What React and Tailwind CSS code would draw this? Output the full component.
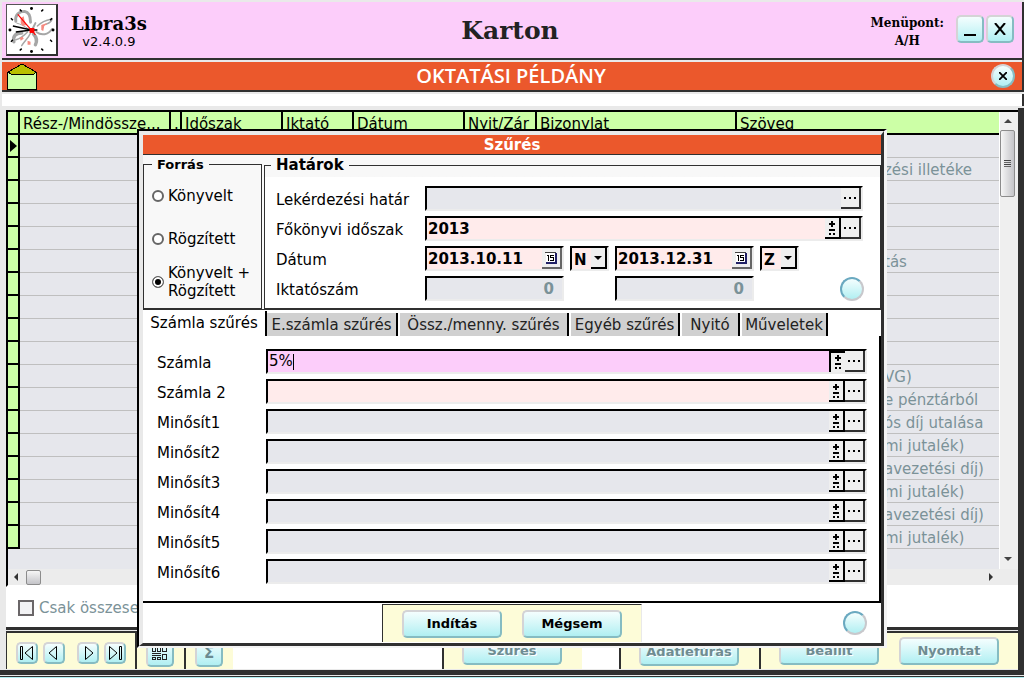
import React from 'react';

const Bevel = ({ className = '', children, ...rest }) => (
  <button
    type="button"
    className={`flex shrink-0 items-center justify-center rounded-[5px] border-t-2 border-l-2 border-r-2 border-b-2 border-t-[#d4d4d6] border-l-[#d4d4d6] border-r-[#86bcc2] border-b-[#86bcc2] bg-gradient-to-b from-[#f4fefe] to-[#b0eff2] ${className}`}
    {...rest}
  >
    {children}
  </button>
);

const RoundButton = ({ label }) => (
  <button
    type="button"
    aria-label={label}
    className="size-6 shrink-0 rounded-full border-2 border-t-[#6aa9c0] border-l-[#6aa9c0] border-r-[#c8c8cc] border-b-[#c8c8cc] bg-gradient-to-b from-[#f4fefe] to-[#b0eff2]"
  />
);

const Logo = () => (
  <svg viewBox="0 0 50 50" className="size-[50px]" aria-hidden="true">
    <g fill="none" stroke="#a6a6a6" strokeLinecap="round">
      <path d="M9 16C8 10 12 6 18 6c5 1 6 6 6 11" strokeWidth="3" />
      <path d="M10 18c4 1 8 3 12 6" strokeWidth="1" />
      <path d="M31 21c4-4 8-6 14-7M46 14c-1 3-3 4-6 5" strokeWidth="1.5" />
      <path d="M30 27c5 4 12 3 16-3" strokeWidth="2" />
      <path d="M15 28c-7 0-9 4-8 9" strokeWidth="3.5" />
      <path d="M9 35c4-1 8-4 12-8M24 28c-2 5-6 8-9 13" strokeWidth="1.5" />
      <path d="M27 29c3 3 4 7 2 11" strokeWidth="3.5" />
      <path d="M26 24l3-6" strokeWidth="2" />
    </g>
    <g fill="#f58a80">
      <path d="M14 13l3-2 1 5 2 4-4 1-2-3zM35 20l5-2 1 1-3 2-1 5-2-1zM13 33l3-1 1 2-3 2zM21 36l3 1v3h-3z" />
    </g>
    <g fill="#000">
      <circle cx="25" cy="3" r="1.5" />
      <circle cx="25" cy="47" r="1.5" />
      <circle cx="3" cy="25" r="1.5" />
      <circle cx="47" cy="25" r="1.5" />
    </g>
    <path
      d="M13 4l2 2M37 4l-2 2M4 13l2 2M46 13l-2 2M4 37l2-2M46 37l-2-2M13 46l2-2M37 46l-2-2M6 21l19 4-16 2M25 25h6"
      stroke="#000"
      strokeWidth="1.5"
      fill="none"
    />
    <path d="M11 9l18 21" stroke="#f00" strokeWidth="1.2" />
    <rect x="23" y="23" width="5" height="5" fill="#f00" />
  </svg>
);

const Envelope = () => (
  <svg viewBox="0 0 30 27" className="h-[27px] w-[30px]" aria-hidden="true" shapeRendering="crispEdges">
    <rect x=".5" y="9.5" width="29" height="17" fill="#ccffa6" stroke="#000" />
    <path d="M1 9L15 1l14 8-2 2H4z" fill="#b9bf00" stroke="#000" />
  </svg>
);

const NavIcon = ({ d }) => (
  <svg viewBox="0 0 16 16" className="size-4 shrink-0" fill="none" stroke="#000" aria-hidden="true">
    <path d={d} />
  </svg>
);

const DotsButton = () => (
  <button
    type="button"
    aria-label="Tallózás"
    className="flex h-[21px] w-[20px] shrink-0 items-center justify-center gap-[3px] border-r-2 border-b-2 border-[#303030] bg-[#efefef] pt-px"
  >
    <i className="size-[2px] bg-black" />
    <i className="size-[2px] bg-black" />
    <i className="size-[2px] bg-black" />
  </button>
);

const SignButton = ({ pressed }) => (
  <button
    type="button"
    aria-label="Előjel"
    className={`flex h-[21px] w-4 shrink-0 items-center justify-center bg-[#efefef] ${
      pressed ? 'border-t-2 border-l-2 border-black' : 'border-r-2 border-b-2 border-black pt-[2px]'
    }`}
  >
    <svg viewBox="0 0 8 15" className="h-[15px] w-2" fill="#000" shapeRendering="crispEdges" aria-hidden="true">
      <path d="M3 0h2v2h2v2H5v2H3V4H1V2h2zM1 8h6v2H1zM1 12h2v2H1zM5 12h2v2H5z" />
    </svg>
  </button>
);

const fieldBox = 'flex h-[25px] border-2 border-t-black border-l-black border-r-[#ececec] border-b-[#ececec]';

const DateField = ({ id, value, label }) => (
  <div className={`${fieldBox} w-[139px] bg-[#ffebeb]`}>
    <input id={id} aria-label={label} defaultValue={value} className="w-0 min-w-0 flex-1 pt-px pl-px text-[15px] font-bold outline-none" />
    <button
      type="button"
      aria-label="Naptár"
      className="flex h-[21px] w-5 items-center justify-center border-r-2 border-b-2 border-[#666] bg-[#efefef]"
    >
      <svg viewBox="0 0 12 12" className="size-3" fill="none" shapeRendering="crispEdges" aria-hidden="true">
        <path d="M1 1h9v9H1z" fill="#fff" />
        <path d="M0 .5h10.500" stroke="#444" />
        <path d="M11 1v10H1" stroke="#222266" strokeWidth="2" />
        <path d="M2 3.500h1.500v5M8.500 3.500h-3v2h2.500v2.500h-3" stroke="#000" />
      </svg>
    </button>
  </div>
);

const LetterSelect = ({ value, label }) => (
  <div className={`${fieldBox} relative w-[39px] bg-[#ffebeb]`}>
    <select aria-label={label} defaultValue={value} className="w-full appearance-none pt-px pl-[2px] text-[15px] font-bold outline-none">
      <option>{value}</option>
    </select>
    <span className="pointer-events-none absolute top-0 right-0 flex h-[21px] w-4 items-center justify-center border-r-2 border-b-2 border-black bg-[#efefef]">
      <svg viewBox="0 0 8 4" className="h-1 w-2" aria-hidden="true">
        <path d="M0 0h8L4 4z" />
      </svg>
    </span>
  </div>
);

const NumberField = ({ label, id }) => (
  <input
    id={id}
    aria-label={label}
    defaultValue="0"
    disabled
    className={`${fieldBox} w-[139px] bg-[#e6e7ec] pr-2 text-right text-[15px] font-bold text-[#7b9298]`}
  />
);

const columns = [
  { title: 'Rész-/Mindössze...', width: 'w-[151px]' },
  { title: '.', width: 'w-[11px]' },
  { title: 'Időszak', width: 'w-[101px]' },
  { title: 'Iktató', width: 'w-[71px]' },
  { title: 'Dátum', width: 'w-[111px]' },
  { title: 'Nyit/Zár', width: 'w-[72px]' },
  { title: 'Bizonylat', width: 'w-[200px]' },
  { title: 'Szöveg', width: 'w-auto' },
];

const rows = [
  '', 'zési illetéke', '', '', '', 'tás', '', '', '', '', 'VG)', 'e pénztárból', 'ós díj utalása',
  'mi jutalék)', 'avezetési díj)', 'mi jutalék)', 'avezetési díj)', 'mi jutalék)',
];

const Grid = () => (
  <div className="border-t-2 border-l-2 border-black border-b-2 border-b-[#fff] bg-[#e6e7ec]">
    <div className="flex h-[457px]">
      <div className="min-w-0 flex-1">
        <table className="w-full table-fixed border-separate border-spacing-0 text-[15px]">
          <thead>
            <tr className="h-[23px] bg-[#ccffa6] text-left">
              <th className="w-3 border-r-2 border-b-2 border-black" aria-label="Kijelölő" />
              {columns.map((col, i) => (
                <th
                  key={col.title}
                  className={`${col.width} overflow-hidden border-b-2 border-black pt-[3px] pl-[3px] leading-[18px] font-normal whitespace-nowrap ${
                    i < columns.length - 1 ? 'border-r-2' : ''
                  }`}
                >
                  {col.title}
                </th>
              ))}
            </tr>
          </thead>
          <tbody>
            {rows.map((text, i) => (
              <tr key={i} className="h-[23px]">
                <td className="border-r-2 border-b-2 border-black bg-[#ccffa6] p-0">
                  {i === 0 && (
                    <svg viewBox="0 0 7 12" className="ml-[2px] h-3 w-[7px]" aria-hidden="true">
                      <path d="M0 0l7 6-7 6z" />
                    </svg>
                  )}
                </td>
                <td colSpan={7} className="border-b border-[#bfbfbf] p-0" />
                <td className="border-b border-[#bfbfbf] p-0 pt-[2px] pl-[147px] leading-[20px] whitespace-nowrap text-[#7b9298]">{text}</td>
              </tr>
            ))}
          </tbody>
        </table>
      </div>
      <div className="flex w-[19px] flex-col items-center border-l border-white bg-[#efefef] pr-[3px]">
        <svg viewBox="0 0 8 4" className="mt-[7px] h-1 w-2" aria-hidden="true">
          <path d="M0 4h8L4 0z" fill="#444" />
        </svg>
        <div className="mt-[7px] flex h-[67px] w-[15px] flex-col items-center justify-center gap-px rounded-[2px] border border-[#8c8c8c] bg-gradient-to-r from-[#f6f6f6] to-[#c4c4c8]">
          <i className="h-px w-[7px] bg-[#444]" />
          <i className="h-px w-[7px] bg-[#666]" />
          <i className="h-px w-[7px] bg-[#444]" />
          <i className="h-px w-[7px] bg-[#666]" />
        </div>
        <svg viewBox="0 0 8 4" className="mt-auto mb-[8px] h-1 w-2" aria-hidden="true">
          <path d="M0 0h8L4 4z" fill="#444" />
        </svg>
      </div>
    </div>
    <div className="flex h-4 items-center justify-between bg-[#ececec] pr-[25px] pl-[6px]">
      <div className="flex items-center gap-2">
        <svg viewBox="0 0 4 8" className="h-2 w-1" aria-hidden="true">
          <path d="M4 0v8L0 4z" fill="#333" />
        </svg>
        <div className="size-[15px] rounded-[2px] border border-[#8c8c8c] bg-gradient-to-b from-[#f6f6f6] to-[#c4c4c8]" />
      </div>
      <svg viewBox="0 0 4 8" className="h-2 w-1" aria-hidden="true">
        <path d="M0 0v8l4-4z" fill="#333" />
      </svg>
    </div>
  </div>
);

const Header = () => (
  <header className="mt-[2px] ml-[2px] grid h-[58px] shrink-0 grid-cols-3 items-center border-r-2 border-b-2 border-[#303030] bg-[#fccdfa] pr-2 pl-1">
    <div className="flex items-center gap-[13px]">
      <div className="flex size-[52px] items-center justify-center border border-t-[#555] border-l-[#555] border-r-2 border-b-2 border-[#303030] bg-white">
        <Logo />
      </div>
      <div className="pt-1 text-center">
        <div className="font-['DejaVu_Serif'] text-[18px] leading-[20px] font-bold">Libra3s</div>
        <div className="text-[13px] leading-[16px]">v2.4.0.9</div>
      </div>
    </div>
    <h1 className="pt-px text-center font-['DejaVu_Serif'] text-[25px] leading-[32px] font-bold text-[#222]">Karton</h1>
    <div className="flex items-center justify-end">
      <div className="mr-3 pt-1 text-center font-['DejaVu_Serif'] text-[12px] leading-[18px] font-bold">
        Menüpont:
        <br />
        A/H
      </div>
      <div className="flex gap-[2px] pb-[3px]">
        <Bevel className="size-7" aria-label="Kis méret">
          <i className="mt-3 h-[2px] w-3 bg-black" />
        </Bevel>
        <Bevel className="size-7" aria-label="Bezárás">
          <svg viewBox="0 0 12 12" className="size-3" stroke="#000" strokeWidth="2" aria-hidden="true">
            <path d="M1 0l10 12M11 0L1 12" />
          </svg>
        </Bevel>
      </div>
    </div>
  </header>
);

const Banner = () => (
  <div className="ml-[2px] shrink-0 border-r-2 border-b-2 border-[#303030]">
    <div className="grid h-[30px] grid-cols-3 items-center border-t-2 border-[#e9e9e9] bg-[#eb582c] pr-[7px] pl-[5px]">
      <Envelope />
      <h2 className="text-center font-['Open_Sans'] text-[20px] leading-[28px] font-semibold text-white">OKTATÁSI PÉLDÁNY</h2>
      <button
        type="button"
        aria-label="Bezárás"
        className="flex size-6 items-center justify-center justify-self-end rounded-full border-2 border-t-[#d4d4d6] border-l-[#d4d4d6] border-r-[#86bcc2] border-b-[#86bcc2] bg-gradient-to-b from-[#f4fefe] to-[#b0eff2]"
      >
        <svg viewBox="0 0 8 8" className="size-2" stroke="#000" strokeWidth="1.8" aria-hidden="true">
          <path d="M0 0l8 8M8 0L0 8" />
        </svg>
      </button>
    </div>
  </div>
);

const Footer = () => (
  <footer className="flex h-[38px] border-t-2 border-l border-[#303030] bg-white">
    <div className="flex w-[130px] items-center border-r-2 border-[#303030] bg-[#fdfcd8] pt-1 pl-[9px]">
      <Bevel className="size-[22px]" aria-label="Első">
        <NavIcon d="M1.500 1.500v13h2v-13zM13.500 1.500v13L6 8z" />
      </Bevel>
      <Bevel className="ml-[5px] size-[22px]" aria-label="Előző">
        <NavIcon d="M10.500 1.500v13L3 8z" />
      </Bevel>
      <Bevel className="ml-[12px] size-[22px]" aria-label="Következő">
        <NavIcon d="M5.500 1.500v13L13 8z" />
      </Bevel>
      <Bevel className="ml-[5px] size-[22px]" aria-label="Utolsó">
        <NavIcon d="M12.500 1.500v13h2v-13zM2.500 1.500v13L10 8z" />
      </Bevel>
    </div>
    <div className="flex w-[49px] items-center border-r-2 border-[#303030] bg-[#fdfcd8] pt-1 pl-[9px]">
      <Bevel className="size-7" aria-label="Táblázat">
        <svg viewBox="0 0 16 13" className="h-[13px] w-4" fill="none" stroke="#222" shapeRendering="crispEdges" aria-hidden="true">
          <path d="M.5.5h3v4h-3zM5.500.5h3v4h-3zM10.500.5h4v4h-4zM0 6.500h9M0 8.500h9M.5 10.500h3v2h-3zM5.500 10.500h3v2h-3zM10.500 7.500h4v5h-4z" />
        </svg>
      </Bevel>
    </div>
    <div className="flex w-[47px] items-center bg-[#fdfcd8] pt-1 pl-[9px]">
      <Bevel className="size-7 text-[15px] font-bold text-[#6b8a90]">Σ</Bevel>
    </div>
    <div className="flex-1" />
    <div className="flex w-[140px] items-center border-l-2 border-[#303030] bg-[#fdfcd8] pl-[18px]">
      <FooterButton>Szűrés</FooterButton>
    </div>
    <div className="w-[37px]" />
    <div className="flex w-[140px] items-center border-l-2 border-[#303030] bg-[#fdfcd8] pt-[2px] pl-[18px]">
      <FooterButton>Adatlefúrás</FooterButton>
    </div>
    <div className="flex w-[259px] items-center gap-5 border-l-2 border-[#303030] bg-[#fdfcd8] pl-[18px]">
      <FooterButton>Beállít</FooterButton>
      <FooterButton>Nyomtat</FooterButton>
    </div>
  </footer>
);

const FooterButton = ({ children }) => (
  <Bevel className="h-7 w-[100px] text-[13px] font-bold text-[#6f8c92] text-shadow-[1px_1px_0_#fff]">{children}</Bevel>
);

const Radio = ({ checked, children }) => (
  <label className="flex items-center gap-1 text-[15px] leading-[18px]">
    <input
      type="radio"
      name="forras"
      defaultChecked={checked}
      className="size-3 shrink-0 appearance-none rounded-full border-2 border-[#666] bg-white checked:border checked:bg-black checked:shadow-[inset_0_0_0_2px_#fff]"
    />
    <span className="whitespace-nowrap">{children}</span>
  </label>
);

const LimitRow = ({ label, htmlFor, children }) => (
  <div className="flex h-[25px] items-center">
    <label htmlFor={htmlFor} className="w-[149px] shrink-0 pt-[3px]">
      {label}
    </label>
    {children}
  </div>
);

const tabs = [
  { name: 'E.számla szűrés', width: 'w-[131px]' },
  { name: 'Össz./menny. szűrés', width: 'w-[169px]' },
  { name: 'Egyéb szűrés', width: 'w-[109px]' },
  { name: 'Nyitó', width: 'w-[58px]' },
  { name: 'Műveletek', width: 'w-[86px]' },
];

const accounts = [
  { label: 'Számla', tone: 'bg-[#fccdfa]', value: '5%' },
  { label: 'Számla 2', tone: 'bg-[#ffebeb]' },
  { label: 'Minősít1', tone: 'bg-[#e6e7ec]' },
  { label: 'Minősít2', tone: 'bg-[#e6e7ec]' },
  { label: 'Minősít3', tone: 'bg-[#e6e7ec]' },
  { label: 'Minősít4', tone: 'bg-[#e6e7ec]' },
  { label: 'Minősít5', tone: 'bg-[#e6e7ec]' },
  { label: 'Minősít6', tone: 'bg-[#e6e7ec]' },
];

const FilterDialog = () => (
  <div
    role="dialog"
    aria-label="Szűrés"
    className="w-[750px] border-t-2 border-r-3 border-b-2 border-l-2 border-t-black border-l-black border-r-[#f4f4f4] border-b-[#f4f4f4]"
  >
    <div className="border-t-4 border-r-3 border-b-3 border-l-4 border-t-[#e9e9e9] border-l-[#e9e9e9] border-r-[#303030] border-b-[#303030] bg-white text-[15px]">
      <h2 className="h-5 border-b border-[#303030] bg-[#eb582c] text-center leading-[20px] font-bold text-white">Szűrés</h2>
      <div className="flex gap-[2px] border-b border-[#303030] bg-[#f8f8f8]">
        <fieldset className="h-[154px] w-[119px] border border-[#303030] px-2">
          <legend className="px-[5px] pt-px text-[13px] leading-[17px] font-bold">Forrás</legend>
          <div className="flex flex-col pt-[14px]">
            <Radio>Könyvelt</Radio>
            <div className="mt-[25px]">
              <Radio>Rögzített</Radio>
            </div>
            <div className="mt-4">
              <Radio checked>
                Könyvelt +<br />
                Rögzített
              </Radio>
            </div>
          </div>
        </fieldset>
        <fieldset className="h-[154px] flex-1 border border-[#303030] bg-gradient-to-b from-[#f8f8f8] from-8% to-white to-8% px-[6px]">
          <legend className="px-[5px] pt-px leading-[19px] font-bold">Határok</legend>
          <div className="flex flex-col gap-[5px] pt-[11px] pl-[5px]">
            <LimitRow label="Lekérdezési határ" htmlFor="limit">
              <div className={`${fieldBox} w-[438px] bg-[#e6e7ec]`}>
                <input id="limit" className="min-w-0 flex-1 outline-none" />
                <DotsButton />
              </div>
            </LimitRow>
            <LimitRow label="Főkönyvi időszak" htmlFor="period">
              <div className={`${fieldBox} w-[438px] bg-[#ffebeb]`}>
                <input id="period" defaultValue="2013" className="min-w-0 flex-1 pt-px pl-px font-bold outline-none" />
                <SignButton />
                <DotsButton />
              </div>
            </LimitRow>
            <LimitRow label="Dátum" htmlFor="from">
              <div className="flex gap-[6px]">
                <DateField id="from" label="Dátum" value="2013.10.11" />
                <LetterSelect label="Nyitó" value="N" />
                <DateField id="to" label="Dátum vége" value="2013.12.31" />
                <LetterSelect label="Záró" value="Z" />
              </div>
            </LimitRow>
            <LimitRow label="Iktatószám" htmlFor="number">
              <NumberField id="number" label="Iktatószám" />
              <div className="ml-[51px] flex flex-1 items-center justify-between pr-[10px]">
                <NumberField label="Iktatószám vége" />
                <RoundButton label="Rendben" />
              </div>
            </LimitRow>
          </div>
        </fieldset>
      </div>

      <div role="tablist" className="flex h-[26px] items-end">
        <button type="button" role="tab" aria-selected="true" className="h-[25px] w-[124px] border-r-2 border-black pb-[2px] text-[15px] leading-[20px] whitespace-nowrap">
          Számla szűrés
        </button>
        {tabs.map((tab) => (
          <button
            key={tab.name}
            type="button"
            role="tab"
            aria-selected="false"
            className={`${tab.width} mr-[2px] h-[23px] border-r-2 border-black bg-[#d0d0d0] leading-[22px] whitespace-nowrap text-[#222]`}
          >
            {tab.name}
          </button>
        ))}
      </div>

      <div className="flex flex-col gap-[5px] border-r-2 border-b-2 border-black pt-[13px] pr-3 pb-[17px] pl-[14px]">
        {accounts.map((row, i) => (
          <div key={row.label} className="flex h-[25px] items-center">
            <label htmlFor={`account${i}`} className="w-[109px] pt-[3px] leading-[22px]">
              {row.label}
            </label>
            <div className={`${fieldBox} min-w-0 flex-1 ${row.tone}`}>
              {row.value ? (
                <div className="flex flex-1 items-center">
                  <input id={`account${i}`} defaultValue={row.value} className="field-sizing-content pl-px outline-none" />
                  <i className="h-4 w-px bg-black" />
                </div>
              ) : (
                <input id={`account${i}`} className="min-w-0 flex-1 outline-none" />
              )}
              <SignButton pressed={i === 0} />
              <DotsButton />
            </div>
          </div>
        ))}
      </div>

      <div className="flex h-10 items-center pr-[14px]">
        <div className="ml-[239px] flex h-[38px] w-[260px] items-center justify-center gap-5 border-t border-r border-l border-t-[#303030] border-l-[#303030] border-r-[#e9e9e9] bg-[#fdfcd8]">
          <Bevel className="h-7 w-[100px] text-[13px] font-bold">Indítás</Bevel>
          <Bevel className="h-7 w-[100px] text-[13px] font-bold">Mégsem</Bevel>
        </div>
        <div className="flex-1" />
        <RoundButton label="Állapot" />
      </div>
    </div>
  </div>
);

export default function App() {
  return (
    <div className="relative flex h-screen flex-col overflow-hidden bg-[#e9e9e9] font-['DejaVu_Sans',sans-serif] text-black">
      <Header />
      <Banner />
      <div className="mt-[2px] ml-[2px] h-3 shrink-0 border-r-2 border-[#303030] bg-white" />
      <main className="mt-[2px] flex min-h-0 flex-1 flex-col border-r-6 border-b-5 border-[#303030] pt-[2px] pl-[6px]">
        <Grid />
        <div className="flex h-[43px] shrink-0 items-center border-b-3 border-[#303030] bg-white pl-3">
          <label className="flex items-center gap-[5px] pt-[2px] text-[15px] whitespace-nowrap text-[#7b9298]">
            <input type="checkbox" disabled className="size-4 appearance-none border-2 border-[#6a6668] bg-[#f2f2f4]" />
            Csak összesen
          </label>
        </div>
        <div className="mt-px">
          <Footer />
        </div>
      </main>
      <div className="mt-px h-[2px] shrink-0 border-t border-[#303030] bg-[#b0eff2]" />
      <div className="absolute inset-x-0 top-[129px] flex justify-center">
        <FilterDialog />
      </div>
    </div>
  );
}
